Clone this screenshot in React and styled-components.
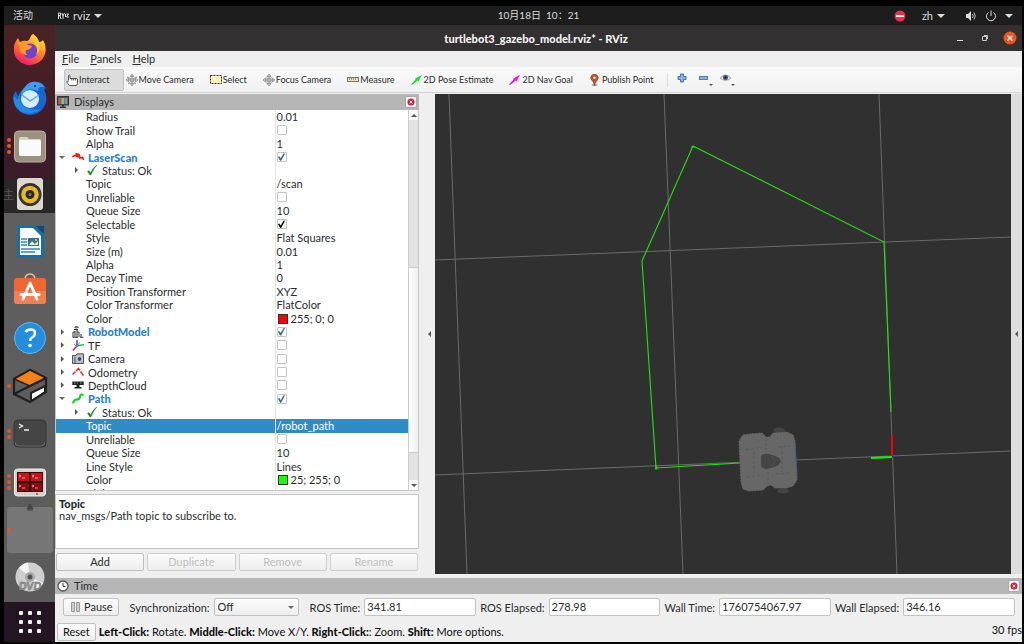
import React from 'react'
import styled, { createGlobalStyle } from 'styled-components'

const GlobalStyle = createGlobalStyle`
  * { box-sizing: border-box; }
  body {
    margin: 0;
    background: #000;
    color: #2a2c2e;
    font-family: Lato, "Noto Sans CJK SC", sans-serif;
    font-size: 11px;
    line-height: 13px;
  }
  button, input, select { font: inherit; color: inherit; }
`

const Desktop = styled.div`
  min-height: 100vh;
  display: flex;
  flex-direction: column;
  padding: 6px 2px 2px 4px;
`

/* ---------- top bar ---------- */

const TopBar = styled.header`
  height: 19px;
  display: grid;
  grid-template-columns: 1fr auto 1fr;
  align-items: center;
  padding: 0 9px;
  background: #1d1d1d;
  color: #dcdcdc;
`

const TopGroup = styled.div`
  display: flex;
  align-items: center;
  justify-content: ${p => (p.$end ? 'flex-end' : 'flex-start')};
`

const TopButton = styled.button`
  display: flex;
  align-items: center;
  gap: 4px;
  padding: 0;
  margin-right: ${p => p.$space || 0}px;
  border: 0;
  background: none;
`

const Activities = styled(TopButton)`
  font-size: 10px;
`

const Clock = styled.time`
  margin-left: 51px;
  font-size: 10px;
`

const Caret = styled.span`
  border: 4px solid transparent;
  border-top-color: #dcdcdc;
  border-bottom: 0;
`

/* ---------- dock ---------- */

const Body = styled.div`
  flex: 1;
  display: flex;
`

const Dock = styled.nav`
  width: 51px;
  display: flex;
  flex-direction: column;
  padding-top: 1px;
  background: linear-gradient(
    #4a2224 0, #3a1b2a 154px, #292728 154px, #292728 188px,
    #5f5f5f 188px, #5b5b5b 577px, #231521 577px
  );
`

const DockItem = styled.button`
  position: relative;
  height: 48px;
  padding: 0;
  border: 0;
  background: none;
  display: grid;
  place-items: center;
`

const Dots = styled.span`
  position: absolute;
  left: 3px;
  top: 0;
  bottom: 0;
  display: flex;
  flex-direction: column;
  justify-content: center;
  gap: 2px;
`

const Dot = styled.i`
  width: 4px;
  height: 4px;
  border-radius: 50%;
  background: #e95420;
`

const Blank = styled.span`
  width: 46px;
  height: 46px;
  border-radius: 3px;
  background: #777;
`

const AppsButton = styled.button`
  flex: 1;
  padding: 0;
  border: 0;
  background: none;
  display: grid;
  place-items: center;
`

/* ---------- window ---------- */

const Window = styled.main`
  flex: 1;
  min-width: 0;
  display: flex;
  flex-direction: column;
  background: #efefef;
`

const TitleBar = styled.div`
  height: 26px;
  display: grid;
  grid-template-columns: 1fr auto 1fr;
  align-items: center;
  padding-right: 5px;
  background: #333031;
  color: #f2f2f2;
`

const Title = styled.h1`
  margin: 0;
  font-size: 11px;
  font-weight: 900;
  grid-column: 2;
`

const WinButtons = styled.div`
  display: flex;
  justify-content: flex-end;
  align-items: center;
  gap: 11px;
`

const WinButton = styled.button`
  width: 14px;
  height: 14px;
  padding: 0;
  border: 0;
  background: none;
  display: grid;
`

const MenuBar = styled.div`
  height: 16px;
  display: flex;
  align-items: center;
  gap: 11px;
  padding: 0 7px 2px;
`

const MenuItem = styled.button`
  padding: 0;
  border: 0;
  background: none;
`

const ToolBar = styled.div`
  height: 26px;
  display: flex;
  align-items: center;
  padding-left: 9px;
  background: linear-gradient(#fafafa, #f1f1f1);
  border-bottom: 1px solid #d4d4d4;
  font-size: 9px;
`

const Tool = styled.button`
  height: 22px;
  display: flex;
  align-items: center;
  gap: 1px;
  padding: 0 13px 0 1px;
  border: 1px solid ${p => (p.$on ? '#c2c2c2' : 'transparent')};
  border-radius: 2px;
  background: ${p => (p.$on ? '#dcdcdc' : 'none')};
  white-space: nowrap;
`

const SmallTool = styled.button`
  width: 22px;
  height: 22px;
  padding: 0;
  border: 0;
  background: none;
`

const Separator = styled.span`
  width: 1px;
  height: 14px;
  margin-right: 3px;
  background: #ddd;
`

const Middle = styled.div`
  flex: 1;
  display: flex;
  padding-top: 1px;
`

const Displays = styled.section`
  width: 364px;
  display: flex;
  flex-direction: column;
`

const PanelHead = styled.div`
  height: 16px;
  display: flex;
  align-items: center;
  gap: 5px;
  padding: 0 2px;
  background: #b6b6b6;
  h2 { margin: 0; flex: 1; padding-bottom: 1px; font-size: 11px; font-weight: 400; }
`

const CloseButton = styled.button`
  width: 12px;
  height: 12px;
  padding: 0;
  border: 1px solid #aaa;
  border-radius: 2px;
  background: #f4f4f4;
  display: grid;
  place-items: center;
`

const TreeFrame = styled.div`
  height: 381px;
  display: flex;
  overflow: hidden;
  background: #fff;
  border: 1px solid #c6c6c6;
  border-top: 0;
`

const Tree = styled.table`
  flex: 1;
  height: 390px;
  border-collapse: collapse;
  table-layout: fixed;
  td { padding: 0; line-height: 13px; white-space: nowrap; }
  td:first-child { width: 219px; border-right: 1px solid #e4e4e4; }
  td:last-child { padding-left: 1px; }
`

const TreeRow = styled.tr`
  background: ${p => (p.$selected ? '#308cc6' : 'none')};
  color: ${p => (p.$selected ? '#fff' : 'inherit')};
`

const Label = styled.div`
  height: 13px;
  display: flex;
  align-items: center;
  gap: 4px;
  padding-left: ${p => p.$indent}px;
  color: ${p => (p.$on ? '#2a7fcf' : 'inherit')};
  font-weight: ${p => (p.$on ? 900 : 400)};
`

const Twisty = styled.span`
  width: 12px;
  display: grid;
  place-items: center;
  &::before {
    content: "";
    border: 3px solid transparent;
    ${p => (p.$open
      ? 'border-top-color: #666; border-bottom: 0;'
      : 'border-left-color: #555; border-right: 0;')}
  }
`

const Check = styled.input.attrs({ type: 'checkbox' })`
  appearance: none;
  display: grid;
  width: 10px;
  height: 10px;
  margin: 0;
  border: 1px solid #c4c4c4;
  border-radius: 1px;
  background: #fff;
  &:checked::before {
    content: "";
    width: 8px;
    height: 8px;
    background: ${p => p.$tone || '#2f6fad'};
    clip-path: polygon(6% 48%, 24% 40%, 40% 66%, 76% 4%, 94% 8%, 46% 98%, 32% 98%);
  }
`

const Swatch = styled.span`
  display: inline-block;
  width: 10px;
  height: 10px;
  margin: 0 3px 0 1px;
  vertical-align: -1px;
  border: 1px solid #333;
  background: ${p => p.$color};
`

const ScrollBar = styled.div`
  width: 10px;
  display: grid;
  grid-template-rows: 10px 147fr 186fr 27fr 10px;
  border-left: 1px solid #ccc;
  background: #e2e2e2;
`

const ScrollButton = styled.button`
  padding: 0;
  border: 0;
  background: #fafafa;
  display: grid;
  place-items: center;
  &::before {
    content: "";
    border: 3px solid transparent;
    ${p => (p.$up
      ? 'border-bottom-color: #555; border-top: 0;'
      : 'border-top-color: #555; border-bottom: 0;')}
  }
`

const Thumb = styled.div`
  grid-row: 3;
  background: linear-gradient(90deg, #fff, #f0f0f0);
  border: 1px solid #ccc;
  border-width: 1px 0;
`

const LastButton = styled(ScrollButton)`
  grid-row: 5;
`

const Help = styled.div`
  height: 55px;
  margin-top: 3px;
  padding: 3px;
  background: #fff;
  border: 1px solid #c6c6c6;
  p { margin: 0; line-height: 12px; }
  b { font-weight: 900; }
`

const ButtonRow = styled.div`
  display: flex;
  gap: 3px;
  padding: 4px 1px 0;
`

const Button = styled.button`
  height: 18px;
  flex: ${p => (p.$auto ? 'none' : 1)};
  display: flex;
  align-items: center;
  justify-content: center;
  gap: 2px;
  padding: 0 ${p => (p.$auto ? 5 : 0)}px 1px;
  border: 1px solid #c0c0c0;
  border-radius: 2px;
  background: linear-gradient(#fcfcfc, #ededed);
  &:disabled { color: #bfbfbf; border-color: #cfcfcf; }
`

const Splitter = styled.button`
  width: ${p => p.$w}px;
  padding: 0;
  border: 0;
  background: ${p => p.$bg || 'none'};
  display: flex;
  align-items: center;
  justify-content: flex-end;
  &::before {
    content: "";
    margin-right: 4px;
    border: 3px solid transparent;
    border-right-color: #555;
    border-left: 0;
  }
`

const View = styled.div`
  flex: 1;
  min-width: 0;
  background: #303030;
  svg { display: block; width: 100%; height: 100%; }
`

const TimePanel = styled.section`
  margin-top: 4px;
`

const TimeRow = styled.div`
  display: flex;
  align-items: center;
  gap: 4px;
  padding: 4px 7px 0 8px;
`

const FieldLabel = styled.label`
  margin-left: ${p => p.$space || 0}px;
  white-space: nowrap;
`

const Field = styled.input`
  flex: 1;
  min-width: 0;
  height: 18px;
  padding: 0 2px 1px;
  border: 1px solid #c3c3c3;
  border-radius: 2px;
  background: #fff;
`

const SelectBox = styled.span`
  width: 85px;
  display: grid;
  align-items: center;
  &::after {
    content: "";
    grid-area: 1 / 1;
    justify-self: end;
    margin-right: 5px;
    border: 3px solid transparent;
    border-top-color: #666;
    border-bottom: 0;
    pointer-events: none;
  }
`

const Select = styled.select`
  grid-area: 1 / 1;
  appearance: none;
  width: 100%;
  height: 18px;
  padding: 0 3px 1px;
  border: 1px solid #c0c0c0;
  border-radius: 2px;
  background: linear-gradient(#fcfcfc, #ededed);
`

const StatusBar = styled.footer`
  display: flex;
  align-items: center;
  gap: 3px;
  padding: 7px 0 1px 2px;
  color: #111;
  p { margin: 0; flex: 1; padding-bottom: 1px; }
  b { font-weight: 900; }
`

const Fps = styled.span`
  align-self: flex-start;
`

/* ---------- icons ---------- */

const Icon = ({ size = 12, w, children }) => (
  <svg width={w || size} height={size} viewBox={`0 0 ${w || size} ${size}`} fill="none" aria-hidden="true">
    {children}
  </svg>
)

const Arrows = () => (
  <>
    <circle cx="6" cy="6" r="2" stroke="#888" />
    <path d="M6 0L8 2.500H4zM6 12L4 9.500H8zM0 6L2.500 4V8zM12 6L9.500 8V4z" fill="#ccc" stroke="#777" strokeWidth=".6" />
    <path d="M6 2V10M2 6H10" stroke="#888" strokeWidth=".7" />
  </>
)

const toolIcons = {
  hand: (
    <path d="M2.500 6.500V1.500Q3.300.5 4 1.500V4.500H10.500Q11.500 4.500 11.500 6V9.500L10.500 11.500H3.500L.7 8Q.7 6.500 2.500 7.500M5.800 4.500V6.500M7.700 4.500V6.500M9.600 4.500V6.500" fill="#fff" stroke="#444" strokeWidth=".9" />
  ),
  move: (
    <>
      <Arrows />
      <path d="M1 3L4 4.500M11 3L8 4.500M2 10L4.500 8M10 10L7.500 8" stroke="#888" />
    </>
  ),
  select: <rect x=".5" y="1.500" width="11" height="8" fill="#fbf7b0" stroke="#333" strokeDasharray="2 1" />,
  focus: (
    <>
      <Arrows />
      <circle cx="6" cy="6" r="3.500" stroke="#999" strokeWidth=".7" />
    </>
  ),
  measure: (
    <>
      <rect x=".5" y="3.500" width="11" height="4" fill="#eee2ae" stroke="#777" />
      <path d="M2.500 4V6M4.500 4V6M6.500 4V6M8.500 4V6" stroke="#777" strokeWidth=".7" />
    </>
  ),
  pose: <path d="M0 10.500L4.500 5.500L4 4.800L11 .8L7.500 7.200L6.700 6.600L1 11z" fill="#17e02f" />,
  goal: <path d="M0 10.500L4.500 5.500L4 4.800L11 .8L7.500 7.200L6.700 6.600L1 11z" fill="#f410d8" />,
  pin: (
    <>
      <ellipse cx="5.500" cy="11" rx="3" ry="1" fill="#999" />
      <path d="M5.500 11.500Q4.800 8 2.800 6.300A3.700 3.700 0 1 1 8.200 6.300Q6.200 8 5.500 11.500z" fill="#c5502c" stroke="#7c3018" strokeWidth=".5" />
      <circle cx="5.500" cy="3.800" r="1.300" fill="#f6d6c8" />
    </>
  ),
}

const treeIcons = {
  laser: <path d="M.3 5.800L3 4.500L5.500 5.500L4.500 3L7 3.500L8 7L10.500 6.500L11.700 9" stroke="#f21414" strokeWidth="1.700" />,
  check: <path d="M1.500 7.500L3 6.500L4.500 8.800Q7 3.500 11 .8Q7.500 5 4.800 11H4z" fill="#1f7d2a" stroke="#1f7d2a" strokeWidth=".4" />,
  robot: (
    <>
      <ellipse cx="4.500" cy="1.200" rx="2" ry="1.200" fill="#668" />
      <path d="M1 11V6M3 11V5M5 4V11M7 6V11M9 8V11M1 6H3M5 6H7M.5 11.300H6M8 11.300H11.500M2 3.500H6" stroke="#333" />
    </>
  ),
  tf: (
    <>
      <path d="M5 7V1" stroke="#2a36ee" strokeWidth="1.400" />
      <path d="M5 7L.8 11.500" stroke="#ee2222" strokeWidth="1.400" />
      <path d="M5 7L12 5.500" stroke="#18cc28" strokeWidth="1.400" />
      <path d="M2 5L5 8L8 3" stroke="#5662e8" strokeWidth=".7" />
    </>
  ),
  camera: (
    <>
      <path d="M.5 2.500H4L5 .8H11.500V10.500H.5z" fill="#bbb" stroke="#555" />
      <circle cx="7.500" cy="6" r="2.500" fill="#31527e" stroke="#eee" strokeWidth=".8" />
      <path d="M2 5H4M2 7H4M2 9H4" stroke="#555" />
    </>
  ),
  odometry: <path d="M.5 8.500L3.500 5.500M4 5L6.500 2.500L8 4.500M8.500 5.500L11.500 9.500" stroke="#e92e1c" strokeWidth="1.500" />,
  depth: (
    <>
      <path d="M.3 2.500H11.700V6H.3zM4.500 6H7.500V8H4.500zM2.500 8H9.500V9.500H2.500z" fill="#222" />
      <path d="M2 4H3.500M5 4H6M8 4H9.500" stroke="#999" />
    </>
  ),
  path: <path d="M.8 10.500Q2 6.500 5 6.500T8 3.500T11.500 2" stroke="#10cf20" strokeWidth="2" />,
}

const MonitorIcon = () => (
  <Icon>
    <rect x=".5" y=".5" width="11" height="8.500" fill="#555" stroke="#333" />
    <path d="M2.500 2V8" stroke="#c55" strokeWidth="2.500" />
    <path d="M5.800 2V8" stroke="#7c7" strokeWidth="3" />
    <path d="M9 2V8" stroke="#88c" strokeWidth="2.500" />
    <path d="M3 11.300H9M6 9V11" stroke="#333" strokeWidth="1.500" />
  </Icon>
)

const CloseMark = () => (
  <Icon size={8}>
    <circle cx="4" cy="4" r="3.500" fill="#c9213c" />
    <path d="M2.600 2.600L5.400 5.400M5.400 2.600L2.600 5.400" stroke="#fff" />
  </Icon>
)

const dockApps = [
  {
    name: 'Firefox',
    art: (
      <>
        <defs>
          <linearGradient id="fox" x1=".8" y1="0" x2=".3" y2="1">
            <stop offset="0" stopColor="#fff04a" />
            <stop offset=".45" stopColor="#ff8a1e" />
            <stop offset="1" stopColor="#f0146c" />
          </linearGradient>
        </defs>
        <path d="M20 1Q25 4 26 9Q29 9 30 7Q34 14 32 21A16 16 0 0 1 1 19Q0 11 5 5L7 9Q10 7 14 8Q17 7 17 5Q18 2 20 1z" fill="url(#fox)" />
        <circle cx="17" cy="18" r="7.500" fill="#7440d0" />
        <path d="M5 10Q12 8 15 12L19 13Q18 16 14 17Q11 18 14 22Q7 22 7 14z" fill="#ff9a22" />
        <path d="M20 1Q17 8 22 11Q26 15 23 22Q29 17 26 9Q24 5 20 1z" fill="#ffc92c" />
      </>
    ),
  },
  {
    name: 'Thunderbird',
    art: (
      <>
        <path d="M12 6Q16 0 24 1Q30 2 33 7L31 9Q36 17 31 26Q26 34 16 34Q2 32 0 18Q0 13 3 10L5 15Q7 9 12 8z" fill="#1766cf" />
        <path d="M12 6Q16 0 24 1Q30 2 31 6Q25 5 25 10Q15 5 8 15Q8 9 12 6z" fill="#3f9cf5" />
        <circle cx="17" cy="18" r="9" fill="#d6edff" />
        <path d="M9 14L17 20L26 14" stroke="#65a8e8" strokeWidth="1.500" />
        <path d="M1 14Q-1 25 9 31Q19 35 28 28Q20 30 13 27Q6 23 7 14L4 19z" fill="#2389ec" />
        <circle cx="22" cy="5" r="1" fill="#102d5e" />
      </>
    ),
  },
  {
    name: 'Files',
    dots: 3,
    art: (
      <>
        <rect x="1.500" y="2" width="31" height="31" rx="4" fill="#9a917f" stroke="#b9b2a3" />
        <path d="M6 10Q6 8 8 8H14L16 10H27Q28 10 28 12V25Q28 27 26 27H8Q6 27 6 25z" fill="#d9d3c7" />
        <rect x="6" y="11" width="22" height="16" rx="2" fill="#fafafa" />
      </>
    ),
  },
  {
    name: 'Rhythmbox',
    art: (
      <>
        <text x="-10" y="22" fontSize="11" fill="#555">主</text>
        <rect x="4" y="1" width="26" height="32" rx="3" fill="#ded9ce" />
        <circle cx="17" cy="17.500" r="11.500" fill="#333" />
        <circle cx="17" cy="17.500" r="8.800" fill="#efb819" />
        <circle cx="17" cy="17.500" r="4.500" fill="#292929" />
        <circle cx="17" cy="17.500" r="1.500" fill="#777" />
      </>
    ),
  },
  {
    name: 'Writer',
    art: (
      <>
        <path d="M6 1H23L31 9V30Q31 33 28 33H7Q4 33 4 30V3Q4 1 6 1z" fill="#1670a8" />
        <path d="M7 3H20L28 11V30H7z" fill="#fafcff" />
        <path d="M23 1H31V9z" fill="#0c4a78" />
        <path d="M8 14H14M8 17H14M8 20H14M8 24H27M8 27H22" stroke="#3288c0" strokeWidth="1.500" />
        <rect x="15" y="13" width="11" height="8" fill="#356f98" />
        <path d="M16 20L19 16L22 19L25 16V20z" fill="#f0f0e0" />
        <circle cx="23" cy="15" r="1" fill="#ffd84d" />
      </>
    ),
  },
  {
    name: 'Ubuntu Software',
    art: (
      <>
        <path d="M12 7Q12 1 17 1T22 7" stroke="#dfc6a2" strokeWidth="1.500" />
        <rect x="1" y="5" width="32" height="26" rx="3" fill="#ef6534" />
        <path d="M1 18H33V28Q33 31 30 31H4Q1 31 1 28z" fill="#f27f52" />
        <path d="M10 26L17 10L24 26M8 21.500H26" stroke="#fff" strokeWidth="3" strokeLinecap="round" strokeLinejoin="round" />
      </>
    ),
  },
  {
    name: 'Help',
    art: (
      <>
        <circle cx="17" cy="17" r="15.500" fill="#258ddd" stroke="#63b6f0" />
        <path d="M12.500 11Q14 8.500 17.500 8.500Q22 8.500 22 12Q22 15 19 16.500Q17 17.800 17 20" stroke="#fff" strokeWidth="2.500" />
        <circle cx="17" cy="24.500" r="1.800" fill="#fff" />
      </>
    ),
  },
  {
    name: 'Gazebo',
    dots: 1,
    art: (
      <>
        <path d="M17 1L33 9V23L17 33L1 25V10z" stroke="#211f20" strokeWidth="2.200" />
        <path d="M17 1L33 9L17 17L1 10z" fill="#f58113" stroke="#211f20" strokeWidth="1.500" />
        <path d="M17 17L1 25M17 17L33 9" stroke="#211f20" strokeWidth="2.200" />
        <path d="M18 24L32 17V23L18 32z" fill="#fff" stroke="#211f20" strokeWidth="2" />
      </>
    ),
  },
  {
    name: 'Terminal',
    dots: 2,
    art: (
      <>
        <rect x="1" y="3" width="32" height="27" rx="4" fill="#454545" stroke="#333" />
        <path d="M2 25Q2 29 6 29H28Q32 29 32 25" stroke="#696969" />
        <path d="M6 7L9.500 9L6 11M11 13H16" stroke="#ededed" strokeWidth="1.400" />
      </>
    ),
  },
  {
    name: 'Terminator',
    dots: 3,
    art: (
      <>
        <rect x="1.500" y="4" width="31" height="27" rx="3" fill="#d2d2ca" stroke="#eee" />
        <rect x="4" y="7" width="26" height="20" fill="#390507" />
        <path d="M5 8H16V16H5zM18 8H29V16H18z" fill="#c5151a" />
        <path d="M5 18H16V26H5zM18 18H29V26H18z" fill="#8b0c10" />
        <path d="M6 10L8 11L6 12M9 13H12M19 10L21 11L19 12M22 13H25M6 20L8 21L6 22M9 23H12M19 20L21 21L19 22M22 23H25" stroke="#f3b6b6" strokeWidth=".8" />
        <path d="M23 29H25" stroke="#e22" strokeWidth="1.500" />
      </>
    ),
  },
  { name: 'Running window', dots: 1 },
  {
    name: 'DVD',
    art: (
      <>
        <path d="M17-57L20-52H14zM14-51H20" fill="#444" stroke="#444" />
        <circle cx="17" cy="16" r="14.500" fill="#cfcfcf" />
        <path d="M17 16L6 7Q10 2 15 1.500zM17 16L30 22Q28 27 23 29z" fill="#f3f3f3" />
        <circle cx="17" cy="16" r="5" fill="#aaa" />
        <circle cx="17" cy="16" r="2.500" fill="#555" />
        <text x="17" y="29" textAnchor="middle" fontSize="11" fontWeight="900" fontStyle="italic" fill="#9b9b9b" stroke="#666" strokeWidth=".4">DVD</text>
      </>
    ),
  },
]

/* ---------- data ---------- */

const tools = [
  ['hand', 'Interact'],
  ['move', 'Move Camera'],
  ['select', 'Select'],
  ['focus', 'Focus Camera'],
  ['measure', 'Measure'],
  ['pose', '2D Pose Estimate'],
  ['goal', '2D Nav Goal'],
  ['pin', 'Publish Point'],
]

const rows = [
  { label: 'Radius', value: '0.01' },
  { label: 'Show Trail', check: false },
  { label: 'Alpha', value: '1' },
  { label: 'LaserScan', icon: 'laser', open: true, check: true },
  { label: 'Status: Ok', icon: 'check', nested: true },
  { label: 'Topic', value: '/scan' },
  { label: 'Unreliable', check: false },
  { label: 'Queue Size', value: '10' },
  { label: 'Selectable', check: true, tone: '#111' },
  { label: 'Style', value: 'Flat Squares' },
  { label: 'Size (m)', value: '0.01' },
  { label: 'Alpha', value: '1' },
  { label: 'Decay Time', value: '0' },
  { label: 'Position Transformer', value: 'XYZ' },
  { label: 'Color Transformer', value: 'FlatColor' },
  { label: 'Color', value: '255; 0; 0', color: '#ff0000' },
  { label: 'RobotModel', icon: 'robot', check: true },
  { label: 'TF', icon: 'tf', check: false },
  { label: 'Camera', icon: 'camera', check: false },
  { label: 'Odometry', icon: 'odometry', check: false },
  { label: 'DepthCloud', icon: 'depth', check: false },
  { label: 'Path', icon: 'path', open: true, check: true },
  { label: 'Status: Ok', icon: 'check', nested: true },
  { label: 'Topic', value: '/robot_path', selected: true },
  { label: 'Unreliable', check: false },
  { label: 'Queue Size', value: '10' },
  { label: 'Line Style', value: 'Lines' },
  { label: 'Color', value: '25; 255; 0', color: '#19ff00' },
  { label: 'Alpha', value: '1' },
]

const indentOf = row => {
  if (!row.icon) return 30
  return row.nested ? 14 : 0
}

function DisplayRow({ row }) {
  return (
    <TreeRow $selected={row.selected}>
      <td>
        <Label $indent={indentOf(row)} $on={row.icon && row.check}>
          {row.icon && <Twisty $open={row.open} />}
          {row.icon && <Icon>{treeIcons[row.icon]}</Icon>}
          <span>{row.label}</span>
        </Label>
      </td>
      <td>
        {row.check !== undefined && (
          <Check defaultChecked={row.check} $tone={row.tone} aria-label={row.label} />
        )}
        {row.color && <Swatch $color={row.color} />}
        {row.value}
      </td>
    </TreeRow>
  )
}

function Scene() {
  return (
    <svg viewBox="435 94 576 480" preserveAspectRatio="xMidYMid slice" fill="none">
      <g stroke="#6a6a6a">
        <path d="M449 94L467 574M664 94L683 574M879 94L897 574" />
        <path d="M435 260L1011 237M435 475L1011 451" />
      </g>
      <path d="M740 463L656 468L642 261L693 146L884 242L891 412" stroke="#1ee60a" strokeWidth="1.100" />
      <path d="M655 468H658M691 147H695M656 465V470" stroke="#1ee60a" />
      <path d="M892 456V435" stroke="#f00" strokeWidth="2" />
      <path d="M871 458L892 457" stroke="#0f0" strokeWidth="2" />
      <rect x="892" y="456" width="2" height="2" fill="#22f" />
      <ellipse cx="779" cy="430" rx="6" ry="2.500" fill="#444" />
      <ellipse cx="783" cy="491" rx="6" ry="2.500" fill="#444" />
      <path d="M743 435L750 434L762 433L766 437L770 437L773 433L787 432L793 435L795 441L797 480L793 486L787 488L775 488L771 485L767 486L763 490L749 491L743 489L741 482L739 441z" fill="#676767" stroke="#676767" strokeDasharray="2 1" />
      <path d="M746 450L762 447M778 447L790 446M747 477L763 475M776 474L790 473M754 451V473M766 438V450M768 472V483M782 446V472" stroke="#5b5b5b" strokeDasharray="3 2" />
      <path d="M795 445L797 474" stroke="#39617e" />
      <path d="M761 456Q765 452 772 455Q780 457 781 461Q780 466 771 468Q764 471 761 466z" fill="#454545" />
      <path d="M772 456L775 461L772 467" stroke="#505050" />
    </svg>
  )
}

export default function App() {
  return (
    <Desktop>
      <GlobalStyle />
      <TopBar>
        <TopGroup>
          <Activities $space={25}>活动</Activities>
          <TopButton>
            <Icon w={11} size={8}>
              <path d="M.5 7V1H2.500V3.500H.5M2 4L3 7M4 1L5 4L6.500 1M5 4V7M7.500 2V5M8.500 2H10.500L8.500 5H11" stroke="#ddd" />
            </Icon>
            rviz <Caret />
          </TopButton>
        </TopGroup>
        <Clock>10月18日&nbsp; 10：21</Clock>
        <TopGroup $end>
          <TopButton $space={16} aria-label="Do not disturb">
            <Icon>
              <circle cx="6" cy="6" r="5.500" fill="#f22c46" />
              <path d="M2 6H10" stroke="#fff" strokeWidth="2" />
            </Icon>
          </TopButton>
          <TopButton $space={20}>zh <Caret /></TopButton>
          <TopButton aria-label="System menu">
            <Icon>
              <path d="M1 4H3L6 1V11L3 8H1z" fill="#ddd" />
              <path d="M7.500 4Q9 6 7.500 8M9 2.500Q11.500 6 9 9.500" stroke="#bbb" />
            </Icon>
            <span />
            <Icon>
              <path d="M3.500 2.500A4.500 4.500 0 1 0 8.500 2.500M6 .5V6" stroke="#ddd" />
            </Icon>
            <span />
            <Caret />
          </TopButton>
        </TopGroup>
      </TopBar>

      <Body>
        <Dock>
          {dockApps.map(app => (
            <DockItem key={app.name} aria-label={app.name}>
              {app.art ? (
                <svg width="34" height="34" viewBox="0 0 34 34" fill="none" overflow="visible">{app.art}</svg>
              ) : (
                <Blank />
              )}
              <Dots>
                {Array.from({ length: app.dots || 0 }, (_, i) => <Dot key={i} />)}
              </Dots>
            </DockItem>
          ))}
          <AppsButton aria-label="Show applications">
            <Icon size={22}>
              {[2, 11, 20].map(y => [2, 11, 20].map(x => (
                <rect key={`${x}-${y}`} x={x - 2} y={y - 2} width="4" height="4" rx="1" fill="#f2f2f2" />
              )))}
            </Icon>
          </AppsButton>
        </Dock>

        <Window>
          <TitleBar>
            <Title>turtlebot3_gazebo_model.rviz* - RViz</Title>
            <WinButtons>
              <WinButton aria-label="Minimize">
                <Icon size={14}><path d="M4 9.500H10" stroke="#ddd" /></Icon>
              </WinButton>
              <WinButton aria-label="Restore">
                <Icon size={14}><path d="M4.500 5.500H8.500V9.500H4.500zM6 4.500H9.500V8" stroke="#ccc" /></Icon>
              </WinButton>
              <WinButton aria-label="Close">
                <Icon size={14}>
                  <circle cx="7" cy="7" r="6.500" fill="#e95420" />
                  <path d="M4.500 4.500L9.500 9.500M9.500 4.500L4.500 9.500" stroke="#fff" strokeWidth="1.200" />
                </Icon>
              </WinButton>
            </WinButtons>
          </TitleBar>

          <MenuBar>
            {['File', 'Panels', 'Help'].map(name => (
              <MenuItem key={name}><u>{name[0]}</u>{name.slice(1)}</MenuItem>
            ))}
          </MenuBar>

          <ToolBar>
            {tools.map(([icon, name], i) => (
              <Tool key={name} $on={i === 0}>
                <Icon>{toolIcons[icon]}</Icon>
                {name}
              </Tool>
            ))}
            <Separator />
            <SmallTool aria-label="Add tool">
              <Icon size={18}><path d="M7.500 5H10.500V7.500H13V10.500H10.500V13H7.500V10.500H5V7.500H7.500z" fill="#8db4df" stroke="#3d73b3" /></Icon>
            </SmallTool>
            <SmallTool aria-label="Remove tool">
              <Icon size={18}>
                <rect x="4.500" y="7.500" width="8" height="3" fill="#8db4df" stroke="#4d7fba" />
                <path d="M14 15H18L16 17z" fill="#555" />
              </Icon>
            </SmallTool>
            <SmallTool aria-label="View options">
              <Icon size={18}>
                <path d="M3 9Q8.500 3 14 9Q8.500 14 3 9z" fill="#ddd" stroke="#aaa" />
                <circle cx="8.500" cy="8.500" r="2.500" fill="#4a5590" />
                <circle cx="8.500" cy="8.500" r="1" fill="#111" />
                <path d="M14 15H18L16 17z" fill="#555" />
              </Icon>
            </SmallTool>
          </ToolBar>

          <Middle>
            <Displays>
              <PanelHead>
                <MonitorIcon />
                <h2>Displays</h2>
                <CloseButton aria-label="Close displays"><CloseMark /></CloseButton>
              </PanelHead>
              <TreeFrame>
                <Tree>
                  <tbody>
                    {rows.map((row, i) => <DisplayRow key={i} row={row} />)}
                  </tbody>
                </Tree>
                <ScrollBar>
                  <ScrollButton $up aria-label="Scroll up" />
                  <Thumb />
                  <LastButton aria-label="Scroll down" />
                </ScrollBar>
              </TreeFrame>
              <Help>
                <p><b>Topic</b></p>
                <p>nav_msgs/Path topic to subscribe to.</p>
              </Help>
              <ButtonRow>
                <Button>Add</Button>
                <Button disabled>Duplicate</Button>
                <Button disabled>Remove</Button>
                <Button disabled>Rename</Button>
              </ButtonRow>
            </Displays>
            <Splitter $w={16} aria-label="Collapse left panel" />
            <View><Scene /></View>
            <Splitter $w={11} $bg="#dedede" aria-label="Collapse right panel" />
          </Middle>

          <TimePanel>
            <PanelHead>
              <Icon>
                <circle cx="6" cy="6" r="5" fill="#fff" stroke="#555" strokeWidth="1.300" />
                <path d="M6 3V6.500H8.500" stroke="#333" />
              </Icon>
              <h2>Time</h2>
              <CloseButton aria-label="Close time"><CloseMark /></CloseButton>
            </PanelHead>
            <TimeRow>
              <Button $auto>
                <Icon w={13} size={12}>
                  <path d="M2.500 1.500H5.500V10.500H2.500zM7.500 1.500H10.500V10.500H7.500z" fill="#ccc" stroke="#999" />
                </Icon>
                Pause
              </Button>
              <FieldLabel htmlFor="sync" $space={7}>Synchronization:</FieldLabel>
              <SelectBox>
                <Select id="sync" defaultValue="Off">
                  <option>Off</option>
                  <option>Exact</option>
                  <option>Approximate</option>
                </Select>
              </SelectBox>
              <FieldLabel htmlFor="ros-time" $space={7}>ROS Time:</FieldLabel>
              <Field id="ros-time" defaultValue="341.81" />
              <FieldLabel htmlFor="ros-elapsed">ROS Elapsed:</FieldLabel>
              <Field id="ros-elapsed" defaultValue="278.98" />
              <FieldLabel htmlFor="wall-time">Wall Time:</FieldLabel>
              <Field id="wall-time" defaultValue="1760754067.97" />
              <FieldLabel htmlFor="wall-elapsed">Wall Elapsed:</FieldLabel>
              <Field id="wall-elapsed" defaultValue="346.16" />
            </TimeRow>
            <StatusBar>
              <Button $auto>Reset</Button>
              <p>
                <b>Left-Click:</b> Rotate. <b>Middle-Click:</b> Move X/Y. <b>Right-Click:</b>: Zoom. <b>Shift:</b> More options.
              </p>
              <Fps>30 fps</Fps>
            </StatusBar>
          </TimePanel>
        </Window>
      </Body>
    </Desktop>
  )
}
